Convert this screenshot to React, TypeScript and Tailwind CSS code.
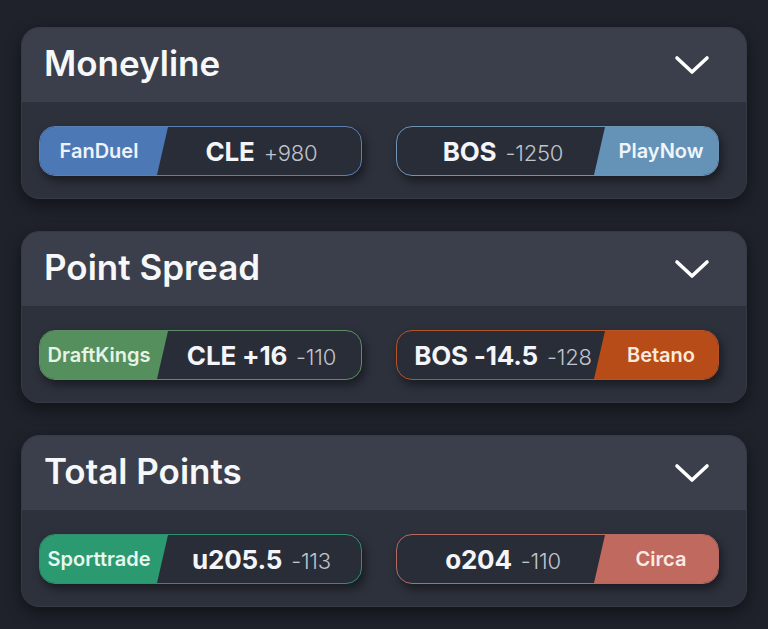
import React from 'react';

type Side = {
  book: string;
  color: string;
  border: string;
  bookText: string;
  label: string;
  odds: string;
};

type Market = {
  title: string;
  left: Side;
  right: Side;
};

const markets: Market[] = [
  {
    title: 'Moneyline',
    left: { book: 'FanDuel', color: 'bg-[#4c78b5]', border: 'border-[#5d80b3]', bookText: 'text-[#eef3fb]', label: 'CLE', odds: '+980' },
    right: { book: 'PlayNow', color: 'bg-[#6593b7]', border: 'border-[#6e94b5]', bookText: 'text-[#eef5fb]', label: 'BOS', odds: '-1250' },
  },
  {
    title: 'Point Spread',
    left: { book: 'DraftKings', color: 'bg-[#558f5e]', border: 'border-[#5f8e66]', bookText: 'text-[#e6f4e6]', label: 'CLE +16', odds: '-110' },
    right: { book: 'Betano', color: 'bg-[#b84c18]', border: 'border-[#b45428]', bookText: 'text-[#fbeadb]', label: 'BOS -14.5', odds: '-128' },
  },
  {
    title: 'Total Points',
    left: { book: 'Sporttrade', color: 'bg-[#2b9a70]', border: 'border-[#2f9070]', bookText: 'text-[#e6f7ef]', label: 'u205.5', odds: '-113' },
    right: { book: 'Circa', color: 'bg-[#bf695f]', border: 'border-[#b66a62]', bookText: 'text-[#fbe9e5]', label: 'o204', odds: '-110' },
  },
];

const Chevron = () => (
  <svg width="36" height="22" viewBox="0 0 36 22" fill="none">
    <path d="M3 4 L18 18 L33 4" stroke="white" strokeWidth="3.6" strokeLinecap="round" strokeLinejoin="round" />
  </svg>
);

const Price = ({ label, odds }: { label: string; odds: string }) => (
  <div className="flex items-baseline gap-[9px] whitespace-nowrap">
    <span className="text-[26px] font-bold text-[#f4f5f8] tracking-[-0.2px]">{label}</span>
    <span className="text-[22px] font-light text-[#c0c4cd] tracking-[-0.2px]">{odds}</span>
  </div>
);

const Pill = ({ side, flip }: { side: Side; flip?: boolean }) => {
  const book = (
    <div
      className={
        flip
          ? `${side.color} w-[124px] shrink-0 flex items-center justify-center pl-[10px] [clip-path:polygon(11px_0,100%_0,100%_100%,0_100%)] -ml-[11px]`
          : `${side.color} w-[128px] shrink-0 flex items-center justify-center pr-[10px] [clip-path:polygon(0_0,100%_0,calc(100%-11px)_100%,0_100%)]`
      }
    >
      <span className={`${side.bookText} text-[20px] font-semibold whitespace-nowrap`}>{side.book}</span>
    </div>
  );
  const price = (
    <div className={flip ? 'flex-1 flex items-center justify-center pl-[4px]' : 'flex-1 flex items-center justify-center -ml-[6px]'}>
      <Price label={side.label} odds={side.odds} />
    </div>
  );
  return (
    <div
      className={`flex h-[50px] flex-1 overflow-hidden rounded-[16px] border-[1.5px] ${side.border} bg-[#292d38] shadow-[3px_5px_10px_rgba(0,0,0,0.45)]`}
    >
      {flip ? (
        <>
          {price}
          {book}
        </>
      ) : (
        <>
          {book}
          {price}
        </>
      )}
    </div>
  );
};

export default function App() {
  return (
    <div
      className="min-h-[629px] w-full bg-[#1f222b] px-[21px] pt-[27px] pb-[25px] flex flex-col gap-[32px]"
      style={{ fontFamily: 'Inter, "Noto Sans", sans-serif' }}
    >
      {markets.map((m) => (
        <div
          key={m.title}
          className="overflow-hidden rounded-[18px] bg-[#2d313c] shadow-[0_6px_16px_rgba(0,0,0,0.45)] border border-[#353a46]"
        >
          <div className="flex h-[74px] items-center justify-between bg-[#3a3f4b] pl-[22px] pr-[36px]">
            <h2 className="text-[35px] font-semibold text-[#f6f7f9] leading-none -mt-[3px]">{m.title}</h2>
            <Chevron />
          </div>
          <div className="flex gap-[34px] pl-[17px] pr-[27px] pt-[24px] pb-[22px]">
            <Pill side={m.left} />
            <Pill side={m.right} flip />
          </div>
        </div>
      ))}
    </div>
  );
}
